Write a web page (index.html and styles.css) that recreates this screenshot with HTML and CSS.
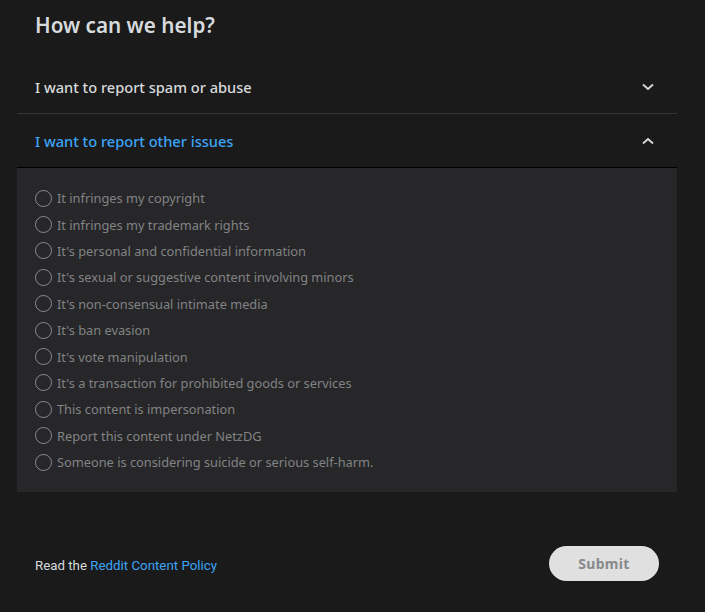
FILE: index.html
```html
<!DOCTYPE html>
<html lang="en">
<head>
    <meta charset="UTF-8">
    <meta name="viewport" content="width=device-width, initial-scale=1.0">
    <title>Report</title>
    <link rel="stylesheet" href="styles.css">
</head>
<body>
    <div class="report">
        <h1>How can we help?</h1>

        <div class="accordion">
            <div class="acc-head">
                <span>I want to report spam or abuse</span>
                <svg class="chev" width="12" height="8" viewBox="0 0 12 8"><path d="M1 1.5 L6 6 L11 1.5" fill="none" stroke="#d7dadc" stroke-width="1.8"/></svg>
            </div>
            <div class="acc-head open">
                <span>I want to report other issues</span>
                <svg class="chev" width="12" height="8" viewBox="0 0 12 8"><path d="M1 6.5 L6 2 L11 6.5" fill="none" stroke="#d7dadc" stroke-width="1.8"/></svg>
            </div>
            <div class="acc-body">
                <label class="option"><span class="radio"></span>It infringes my copyright</label>
                <label class="option"><span class="radio"></span>It infringes my trademark rights</label>
                <label class="option"><span class="radio"></span>It's personal and confidential information</label>
                <label class="option"><span class="radio"></span>It's sexual or suggestive content involving minors</label>
                <label class="option"><span class="radio"></span>It's non-consensual intimate media</label>
                <label class="option"><span class="radio"></span>It's ban evasion</label>
                <label class="option"><span class="radio"></span>It's vote manipulation</label>
                <label class="option"><span class="radio"></span>It's a transaction for prohibited goods or services</label>
                <label class="option"><span class="radio"></span>This content is impersonation</label>
                <label class="option"><span class="radio"></span>Report this content under NetzDG</label>
                <label class="option"><span class="radio"></span>Someone is considering suicide or serious self-harm.</label>
            </div>
        </div>

        <div class="footer">
            <p>Read the <a href="#">Reddit Content Policy</a></p>
            <button class="submit">Submit</button>
        </div>
    </div>
</body>
</html>
```

FILE: styles.css
```css
* {
    margin: 0;
    padding: 0;
    box-sizing: border-box;
}

body {
    background: #1a1a1b;
    font-family: 'Noto Sans', 'Open Sans', sans-serif;
    color: #d7dadc;
}

.report {
    width: 705px;
    height: 612px;
    padding-top: 12px;
}

h1 {
    font-size: 20.7px;
    font-weight: 600;
    line-height: 26px;
    color: #d7dadc;
    margin-left: 35px;
    margin-bottom: 22px;
}

/* Accordion */
.accordion {
    width: 660px;
    margin-left: 17px;
}

.acc-head {
    display: flex;
    align-items: center;
    justify-content: space-between;
    height: 54px;
    padding: 0 23px 0 18px;
    font-size: 14.6px;
    font-weight: 500;
    border-bottom: 1px solid #343536;
}

.acc-head.open {
    color: #3ca4f5;
    border-bottom-color: #000;
}

.acc-body {
    background: #272729;
    padding: 17px 18px 17px;
}

.option {
    display: flex;
    align-items: center;
    height: 26.4px;
    font-size: 12.8px;
    color: #818384;
}

.radio {
    width: 17px;
    height: 17px;
    border: 1.5px solid #8a8c8e;
    border-radius: 50%;
    margin-right: 5px;
}

/* Footer */
.footer {
    display: flex;
    align-items: center;
    justify-content: space-between;
    margin-top: 54px;
    padding: 0 46px 0 35px;
}

.footer p {
    font-family: 'Roboto', sans-serif;
    font-size: 13.3px;
    padding-top: 3px;
    color: #d7dadc;
}

.footer a {
    color: #3ca4f5;
    text-decoration: none;
}

.submit {
    width: 110px;
    height: 35px;
    border: none;
    border-radius: 18px;
    background: #e0e0e0;
    color: #878a8c;
    font-family: 'Noto Sans', sans-serif;
    font-size: 14px;
    font-weight: 700;
    letter-spacing: 0.3px;
}
```
